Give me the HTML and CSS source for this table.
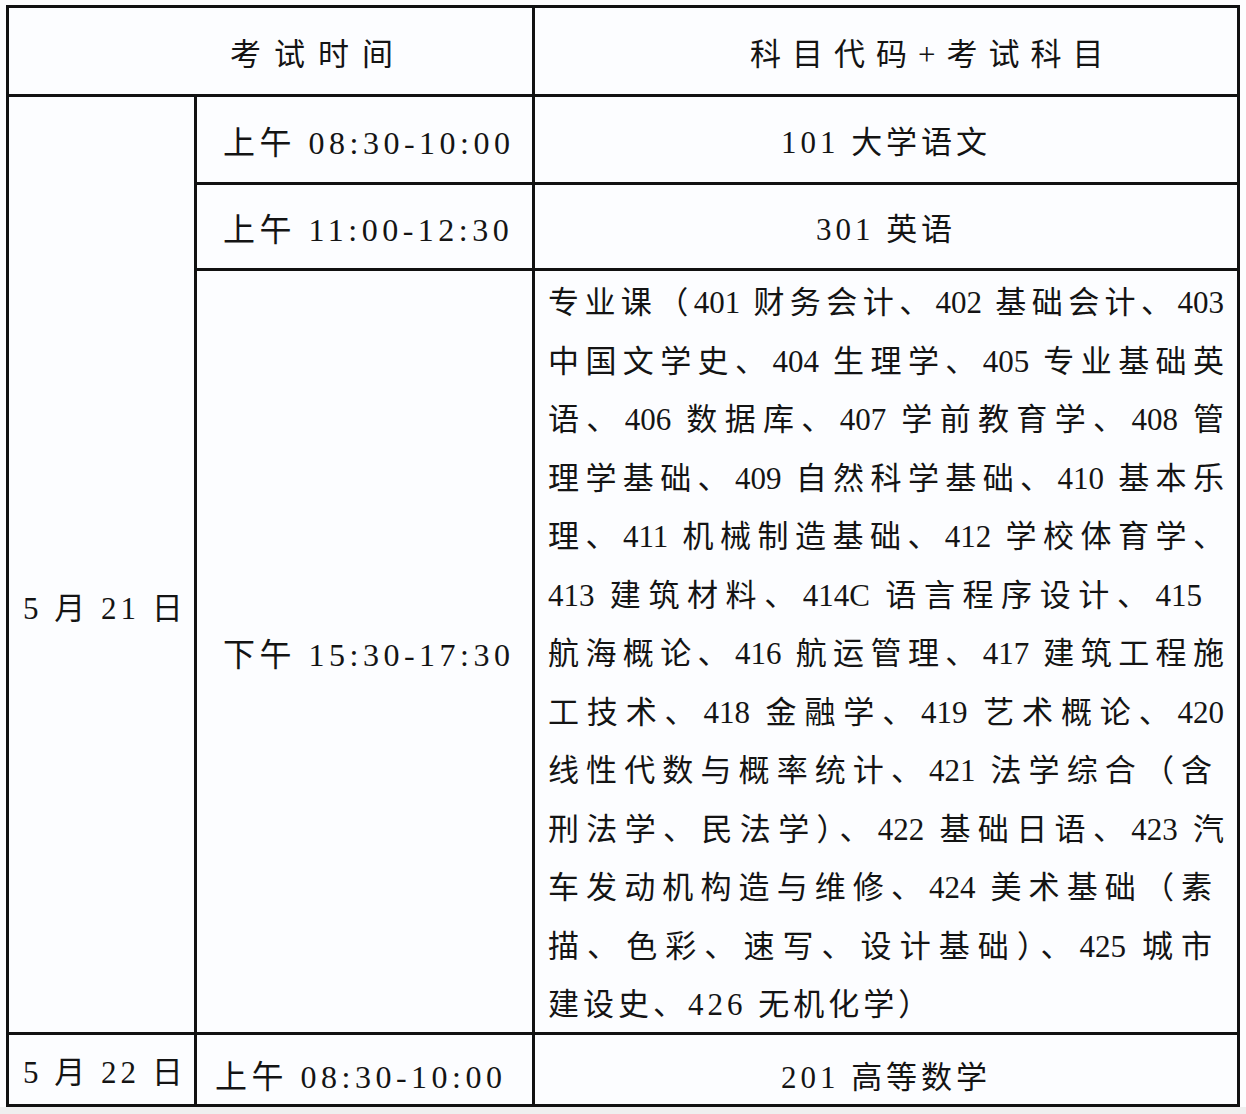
FILE: index.html
```html
<!DOCTYPE html>
<html lang="zh-CN">
<head>
<meta charset="utf-8">
<title>考试时间安排</title>
<link rel="stylesheet" href="styles.css">
</head>
<body>
<div class="sheet">
  <div class="cell head head-time">考试时间</div>
  <div class="cell head head-subject">科目代码+考试科目</div>

  <div class="cell date date-21">5 月 21 日</div>
  <div class="cell time">上午 08:30-10:00</div>
  <div class="cell subject">101 大学语文</div>

  <div class="cell time">上午 11:00-12:30</div>
  <div class="cell subject">301 英语</div>

  <div class="cell time">下午 15:30-17:30</div>
  <div class="subject-list">
    <div class="ln">专业课（401 财务会计、402 基础会计、403</div>
    <div class="ln">中国文学史、404 生理学、405 专业基础英</div>
    <div class="ln">语、406 数据库、407 学前教育学、408 管</div>
    <div class="ln">理学基础、409 自然科学基础、410 基本乐</div>
    <div class="ln">理、411 机械制造基础、412 学校体育学、</div>
    <div class="ln ln-short">413 建筑材料、414C 语言程序设计、415</div>
    <div class="ln">航海概论、416 航运管理、417 建筑工程施</div>
    <div class="ln">工技术、418 金融学、419 艺术概论、420</div>
    <div class="ln ln-mid">线性代数与概率统计、421 法学综合（含</div>
    <div class="ln">刑法学、民法学）、422 基础日语、423 汽</div>
    <div class="ln ln-mid">车发动机构造与维修、424 美术基础（素</div>
    <div class="ln ln-mid">描、色彩、速写、设计基础）、425 城市</div>
    <div class="ln ln-last">建设史、426 无机化学）</div>
  </div>

  <div class="cell date date-22">5 月 22 日</div>
  <div class="cell time time-last">上午 08:30-10:00</div>
  <div class="cell subject subject-last">201 高等数学</div>
</div>
</body>
</html>
```

FILE: styles.css
```css
html {
  background: #efefef;
}

body {
  margin: 0;
  padding: 5px 0 0 6px;
  height: 1107px;
  box-sizing: border-box;
  background: #fdfdfe;
  font-family: "Liberation Serif", "Noto Sans CJK SC", serif;
  color: #141414;
}

.sheet {
  width: 1234px;
  box-sizing: border-box;
  display: grid;
  grid-template-columns: 185px 335px 1fr;
  grid-template-rows: 86px 85px 83px 761px 69px;
  gap: 3px;
  padding: 3px;
  background: #111;
}

.cell {
  background: #fcfdff;
  display: flex;
  align-items: center;
  font-size: 31px;
  letter-spacing: 4px;
  white-space: nowrap;
}

.head-time {
  grid-column: 1 / 3;
  padding-left: 221px;
  letter-spacing: 13px;
}

.head-subject {
  padding-left: 215px;
  letter-spacing: 11px;
}

.date {
  padding-left: 14px;
}

.date-21 {
  grid-row: 2 / 5;
  padding-top: 82px;
}

.time {
  padding-left: 26px;
  font-size: 32px;
  letter-spacing: 4.5px;
}

.time-last {
  padding-left: 18px;
  padding-top: 8px;
}

.subject {
  justify-content: center;
}

.subject-last {
  padding-top: 10px;
}

.subject-list {
  background: #fcfdff;
  padding: 3px 13px 0 13px;
  font-size: 31px;
  line-height: 58.5px;
}

.ln {
  text-align: justify;
  text-align-last: justify;
}

.ln-short {
  padding-right: 22px;
}

.ln-mid {
  padding-right: 12px;
}

.ln-last {
  text-align: left;
  text-align-last: left;
  letter-spacing: 4px;
}
```
